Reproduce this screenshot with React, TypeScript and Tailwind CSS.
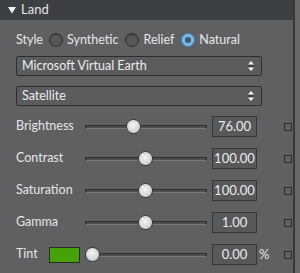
import React from "react";

const font = { fontFamily: 'Lato, "Open Sans", sans-serif' };

function Radio({ checked }: { checked?: boolean }) {
  if (checked) {
    return (
      <span className="w-[14px] h-[14px] rounded-full bg-[#78b6e6] border border-[#4a7fa8] flex items-center justify-center">
        <span className="w-[6px] h-[6px] rounded-full bg-[#3b5b78]" />
      </span>
    );
  }
  return <span className="w-[14px] h-[14px] rounded-full border border-[#2f3133] bg-[#56585a] shadow-[inset_0_1px_1px_rgba(0,0,0,0.35)]" />;
}

function Arrows() {
  return (
    <svg width="6" height="10" viewBox="0 0 6 10">
      <path d="M3 0 L6 3.5 L0 3.5 Z" fill="#f2f2f2" />
      <rect x="0" y="4.5" width="6" height="1" fill="#222" />
      <path d="M3 10 L6 6.5 L0 6.5 Z" fill="#f2f2f2" />
    </svg>
  );
}

function Select({ label }: { label: string }) {
  return (
    <div className="w-[246px] h-[20px] rounded-[2px] border border-[#2c2e30] bg-[#5a5c5e] flex items-center justify-between pl-[5px] pr-[7px] text-[12.5px] text-[#ececec]">
      <span>{label}</span>
      <Arrows />
    </div>
  );
}

function Slider({ pos }: { pos: number }) {
  return (
    <div className="relative w-[122px] h-[21px] flex items-center">
      <div className="w-full h-[4px] border border-[#2f3133] bg-[#4b4d4f] border-b-[#77797b]" />
      <div
        className="absolute top-[3px] w-[15px] h-[15px] rounded-full border border-[#3a3a3a] bg-[radial-gradient(circle_at_45%_40%,#f4f4f4,#d2d2d2_65%,#b8b8b8)]"
        style={{ left: pos }}
      />
    </div>
  );
}

function Row({ label, pos, value, unit, swatch }: { label: string; pos: number; value: string; unit?: string; swatch?: boolean }) {
  return (
    <div className="flex items-center h-[21px]">
      <div className="w-[69px] flex items-center text-[12.5px] text-[#e6e6e6]">
        <span className="w-[33px]">{label}</span>
        {swatch && <span className="w-[31px] h-[16px] border border-[#2a2a2a] bg-[#47a10a]" />}
      </div>
      <Slider pos={pos} />
      <div className="ml-[5px] w-[45px] h-[21px] border border-[#35373a] bg-[#57595b] flex items-center justify-center text-[13px] text-[#ececec]">
        {value}
      </div>
      <span className="w-[27px] pl-[2px] text-[13px] text-[#e6e6e6]">{unit}</span>
      <span className="w-[8px] h-[8px] border border-[#2a2c2e]" />
    </div>
  );
}

export default function App() {
  return (
    <div className="w-[300px] h-[273px] bg-[#66686a] flex" style={font}>
      <div className="w-[295px] h-full bg-[#5e6062] border-r-2 border-[#36383a] flex flex-col">
        <div className="h-[20px] bg-[#3d4042] flex items-center pl-[8px] gap-[5px] text-[13px] text-[#e4e4e4]">
          <svg width="8" height="8" viewBox="0 0 8 8">
            <path d="M0 1 L8 1 L4 7.5 Z" fill="#eeeeee" />
          </svg>
          <span>Land</span>
        </div>
        <div className="flex flex-col pl-[16px] pt-[10px]">
          <div className="h-[20px] flex items-center text-[12.5px] text-[#e6e6e6]">
            <span className="mr-[6px]">Style</span>
            <Radio />
            <span className="ml-[4px] mr-[7px]">Synthetic</span>
            <Radio />
            <span className="ml-[4px] mr-[7px]">Relief</span>
            <Radio checked />
            <span className="ml-[4px]">Natural</span>
          </div>
          <div className="mt-[6px]">
            <Select label="Microsoft Virtual Earth" />
          </div>
          <div className="mt-[10px]">
            <Select label="Satellite" />
          </div>
          <div className="mt-[10px] flex flex-col gap-[11px]">
            <Row label="Brightness" pos={41} value="76.00" />
            <Row label="Contrast" pos={53} value="100.00" />
            <Row label="Saturation" pos={53} value="100.00" />
            <Row label="Gamma" pos={53} value="1.00" />
            <Row label="Tint" pos={0} value="0.00" unit="%" swatch />
          </div>
        </div>
      </div>
    </div>
  );
}
